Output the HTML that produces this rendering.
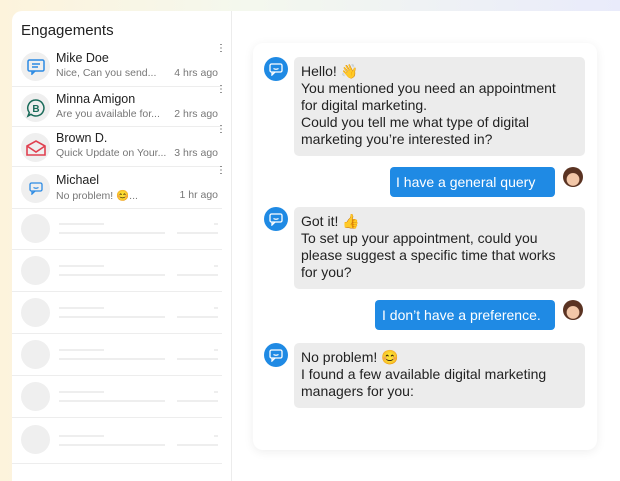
<!DOCTYPE html>
<html><head><meta charset="utf-8"><style>
*{box-sizing:border-box;margin:0;padding:0}
body{width:620px;height:470px;overflow:hidden;font-family:"Liberation Sans",sans-serif;background:linear-gradient(90deg,#fdf3dc 0,#f4f8ee 40%,#e9ebfb 100%);position:relative}
.panel{position:absolute;left:12px;top:11px;width:620px;height:470px;background:#fff;border-radius:10px 0 0 0}
.left{position:absolute;left:12px;top:11px;width:220px;height:470px;border-right:1px solid #ececec}
h1{position:absolute;left:9px;top:11px;font-size:15px;font-weight:normal;color:#222}
.row{position:absolute;left:0;width:210px;border-bottom:1px solid #ededed}
.av{position:absolute;left:9px;width:29px;height:29px;border-radius:50%;background:#efefef;display:flex;align-items:center;justify-content:center}
.nm{position:absolute;left:44px;font-size:12.5px;color:#222}
.pv{position:absolute;left:44px;font-size:10.5px;color:#777;white-space:nowrap}
.tm{position:absolute;right:4px;font-size:10.5px;color:#777}
.dots{position:absolute;right:3px;font-size:10px;color:#333;line-height:4px;width:3px}
.sk{position:absolute;background:#eee;height:2px}
.card{position:absolute;left:253px;top:43px;width:344px;height:407px;background:#fff;border-radius:10px;box-shadow:0 2px 10px rgba(0,0,0,.07)}
.bot{position:absolute;left:264px;width:24px;height:24px;border-radius:50%;background:#1f8ae4;display:flex;align-items:center;justify-content:center}
.b{position:absolute;left:294px;width:291px;background:#ececec;border-radius:5px;padding:6px 7px;font-size:14px;line-height:17px;color:#222;white-space:nowrap}
.u{position:absolute;background:#1f8ae4;color:#fff;border-radius:4px;font-size:14px;height:30px;line-height:30px;padding:0 7px}
.ua{position:absolute;left:563px;width:20px;height:20px;border-radius:50%;background:radial-gradient(circle at 50% 62%,#f2c7a8 0 38%,#5a3322 42%)}
</style></head><body>
<div class="panel"></div>
<div class="left">
<h1>Engagements</h1>
<div class="row" style="top:35px;height:41px">
 <div class="av" style="top:6px"><svg width="18" height="16" viewBox="0 0 18 16"><rect x="1" y="1" width="16" height="11" rx="1.5" fill="none" stroke="#2b8ae4" stroke-width="1.5"/><path d="M5 12v3l3-3M5 5h8M5 8h6" stroke="#2b8ae4" stroke-width="1.5" fill="none"/></svg></div>
 <div class="nm" style="top:5px">Mike Doe</div><div class="pv" style="top:21px">Nice, Can you send...</div><div class="tm" style="top:21px">4 hrs ago</div><div class="dots" style="top:1px">⋮</div></div>
<div class="row" style="top:76px;height:40px">
 <div class="av" style="top:6px"><svg width="20" height="20" viewBox="0 0 20 20"><path d="M10 2a8 8 0 1 1-5 14.3L2 18l1.3-3.3A8 8 0 0 1 10 2z" fill="none" stroke="#1a6b5a" stroke-width="1.5"/><text x="10" y="14" font-size="10" text-anchor="middle" fill="#1a6b5a" font-family="Liberation Sans" font-weight="bold">B</text></svg></div>
 <div class="nm" style="top:5px">Minna Amigon</div><div class="pv" style="top:21px">Are you available for...</div><div class="tm" style="top:21px">2 hrs ago</div><div class="dots" style="top:1px">⋮</div></div>
<div class="row" style="top:116px;height:40px">
 <div class="av" style="top:6px"><svg width="20" height="16" viewBox="0 0 20 16"><path d="M1 6L10 1l9 5v9H1zM1 6l9 6 9-6" fill="none" stroke="#e04050" stroke-width="1.6"/></svg></div>
 <div class="nm" style="top:4px">Brown D.</div><div class="pv" style="top:20px">Quick Update on Your...</div><div class="tm" style="top:20px">3 hrs ago</div><div class="dots" style="top:1px">⋮</div></div>
<div class="row" style="top:156px;height:42px">
 <div class="av" style="top:7px"><svg width="14" height="13" viewBox="0 0 14 13"><rect x="1" y="1" width="12" height="8" rx="1.5" fill="none" stroke="#2b8ae4" stroke-width="1.3"/><path d="M3 9v3l3-3M4.5 5.5q2.5 1.5 5 0" stroke="#2b8ae4" stroke-width="1.3" fill="none"/></svg></div>
 <div class="nm" style="top:6px">Michael</div><div class="pv" style="top:22px">No problem! 😊...</div><div class="tm" style="top:22px">1 hr ago</div><div class="dots" style="top:2px">⋮</div></div>
<div class="row" style="top:198px;height:41px"><div class="av" style="top:5px"></div><div class="sk" style="left:47px;top:14px;width:45px"></div><div class="sk" style="left:47px;top:23px;width:106px"></div><div class="sk" style="left:165px;top:23px;width:41px"></div><div class="sk" style="left:202px;top:14px;width:4px"></div></div>
<div class="row" style="top:239px;height:42px"><div class="av" style="top:6px"></div><div class="sk" style="left:47px;top:15px;width:45px"></div><div class="sk" style="left:47px;top:24px;width:106px"></div><div class="sk" style="left:165px;top:24px;width:41px"></div><div class="sk" style="left:202px;top:15px;width:4px"></div></div>
<div class="row" style="top:281px;height:42px"><div class="av" style="top:6px"></div><div class="sk" style="left:47px;top:15px;width:45px"></div><div class="sk" style="left:47px;top:24px;width:106px"></div><div class="sk" style="left:165px;top:24px;width:41px"></div><div class="sk" style="left:202px;top:15px;width:4px"></div></div>
<div class="row" style="top:323px;height:42px"><div class="av" style="top:6px"></div><div class="sk" style="left:47px;top:15px;width:45px"></div><div class="sk" style="left:47px;top:24px;width:106px"></div><div class="sk" style="left:165px;top:24px;width:41px"></div><div class="sk" style="left:202px;top:15px;width:4px"></div></div>
<div class="row" style="top:365px;height:42px"><div class="av" style="top:6px"></div><div class="sk" style="left:47px;top:15px;width:45px"></div><div class="sk" style="left:47px;top:24px;width:106px"></div><div class="sk" style="left:165px;top:24px;width:41px"></div><div class="sk" style="left:202px;top:15px;width:4px"></div></div>
<div class="row" style="top:407px;height:46px"><div class="av" style="top:7px"></div><div class="sk" style="left:47px;top:17px;width:45px"></div><div class="sk" style="left:47px;top:26px;width:106px"></div><div class="sk" style="left:165px;top:26px;width:41px"></div><div class="sk" style="left:202px;top:17px;width:4px"></div></div>
</div>
<div class="card"></div>
<div class="bot" style="top:57px"><svg width="14" height="13" viewBox="0 0 14 13"><rect x="1" y="1" width="12" height="8" rx="1.5" fill="none" stroke="#fff" stroke-width="1.3"/><path d="M3 9v3l3-3M4.5 5.5q2.5 1.5 5 0" stroke="#fff" stroke-width="1.3" fill="none"/></svg></div>
<div class="b" style="top:57px;height:99px">Hello! 👋<br>You mentioned you need an appointment<br>for digital marketing.<br>Could you tell me what type of digital<br>marketing you’re interested in?</div>
<div class="u" style="left:390px;top:167px;width:165px;padding-left:6px">I have a general query</div>
<div class="ua" style="top:167px"></div>
<div class="bot" style="top:207px"><svg width="14" height="13" viewBox="0 0 14 13"><rect x="1" y="1" width="12" height="8" rx="1.5" fill="none" stroke="#fff" stroke-width="1.3"/><path d="M3 9v3l3-3M4.5 5.5q2.5 1.5 5 0" stroke="#fff" stroke-width="1.3" fill="none"/></svg></div>
<div class="b" style="top:207px;height:82px">Got it! 👍<br>To set up your appointment, could you<br>please suggest a specific time that works<br>for you?</div>
<div class="u" style="left:375px;top:300px;width:180px">I don’t have a preference.</div>
<div class="ua" style="top:300px"></div>
<div class="bot" style="top:343px"><svg width="14" height="13" viewBox="0 0 14 13"><rect x="1" y="1" width="12" height="8" rx="1.5" fill="none" stroke="#fff" stroke-width="1.3"/><path d="M3 9v3l3-3M4.5 5.5q2.5 1.5 5 0" stroke="#fff" stroke-width="1.3" fill="none"/></svg></div>
<div class="b" style="top:343px;height:65px">No problem! 😊<br>I found a few available digital marketing<br>managers for you:</div>
</body></html>
